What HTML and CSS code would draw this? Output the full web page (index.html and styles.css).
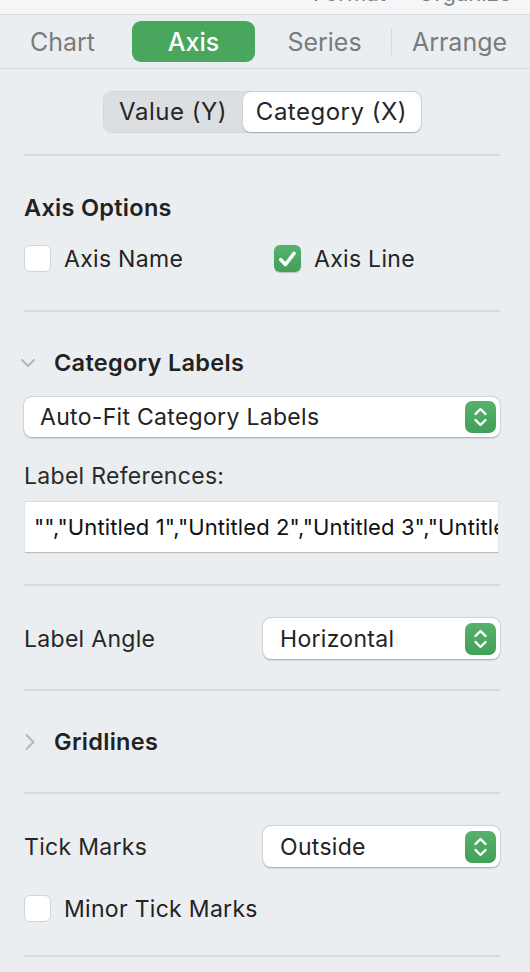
FILE: index.html
```html
<!DOCTYPE html>
<html>
<head>
<meta charset="utf-8">
<link rel="stylesheet" href="styles.css">
</head>
<body>
<div class="topstrip">
  <div class="toptext"><span class="t-format">Format</span><span class="t-organize">Organize</span></div>
</div>
<div class="tabs">
  <div class="tab">Chart</div>
  <div class="tab active">Axis</div>
  <div class="tab">Series</div>
  <div class="tabdiv"></div>
  <div class="tab">Arrange</div>
</div>
<div class="content">
  <div class="segwrap">
    <div class="seg">
      <div class="segitem">Value (Y)</div>
      <div class="segitem on">Category (X)</div>
    </div>
  </div>
  <div class="sep s1"></div>

  <div class="heading h-axis">Axis Options</div>
  <div class="checkrow r-axis">
    <div class="checkitem first"><span class="cb"></span><span>Axis Name</span></div>
    <div class="checkitem"><span class="cb checked"><svg viewBox="0 0 28 28" width="28" height="28"><path d="M7 14.5 L11.8 19.8 L20.8 8.2" fill="none" stroke="#fff" stroke-width="3.6" stroke-linecap="round" stroke-linejoin="round"/></svg></span><span>Axis Line</span></div>
  </div>
  <div class="sep s2"></div>

  <div class="heading disc h-cat"><svg class="chev" viewBox="0 0 16 10" width="16" height="10"><path d="M2 2 L8 8 L14 2" fill="none" stroke="#b4b6b8" stroke-width="2" stroke-linecap="round" stroke-linejoin="round"/></svg><span>Category Labels</span></div>
  <div class="popup full p-auto"><span class="ptext">Auto-Fit Category Labels</span><span class="stepper"><svg viewBox="0 0 31 32" width="31" height="32"><path d="M10.5 13 L15.5 8 L20.5 13" fill="none" stroke="#fff" stroke-width="2.4" stroke-linecap="round" stroke-linejoin="round"/><path d="M10.5 19 L15.5 24 L20.5 19" fill="none" stroke="#fff" stroke-width="2.4" stroke-linecap="round" stroke-linejoin="round"/></svg></span></div>
  <div class="label l-ref">Label References:</div>
  <div class="field">"","Untitled 1","Untitled 2","Untitled 3","Untitled 4","Untitled 5"</div>
  <div class="sep s3"></div>

  <div class="formrow r-angle">
    <div class="rowlabel">Label Angle</div>
    <div class="popup half"><span class="ptext">Horizontal</span><span class="stepper"><svg viewBox="0 0 31 32" width="31" height="32"><path d="M10.5 13 L15.5 8 L20.5 13" fill="none" stroke="#fff" stroke-width="2.4" stroke-linecap="round" stroke-linejoin="round"/><path d="M10.5 19 L15.5 24 L20.5 19" fill="none" stroke="#fff" stroke-width="2.4" stroke-linecap="round" stroke-linejoin="round"/></svg></span></div>
  </div>
  <div class="sep s4"></div>

  <div class="heading disc h-grid"><svg class="chev right" viewBox="0 0 12 18" width="12" height="18"><path d="M2.5 2 L9.5 9 L2.5 16" fill="none" stroke="#b4b6b8" stroke-width="2" stroke-linecap="round" stroke-linejoin="round"/></svg><span>Gridlines</span></div>
  <div class="sep s5"></div>

  <div class="formrow r-tick">
    <div class="rowlabel">Tick Marks</div>
    <div class="popup half"><span class="ptext">Outside</span><span class="stepper"><svg viewBox="0 0 31 32" width="31" height="32"><path d="M10.5 13 L15.5 8 L20.5 13" fill="none" stroke="#fff" stroke-width="2.4" stroke-linecap="round" stroke-linejoin="round"/><path d="M10.5 19 L15.5 24 L20.5 19" fill="none" stroke="#fff" stroke-width="2.4" stroke-linecap="round" stroke-linejoin="round"/></svg></span></div>
  </div>
  <div class="checkrow r-minor">
    <div class="checkitem"><span class="cb"></span><span>Minor Tick Marks</span></div>
  </div>
  <div class="sep s6"></div>
</div>
</body>
</html>
```
FILE: styles.css
```css
html, body {
  margin: 0;
  padding: 0;
}
body {
  width: 530px;
  height: 972px;
  overflow: hidden;
  background: #ebeef1;
  font-family: Inter, "Liberation Sans", sans-serif;
  color: #232323;
  letter-spacing: 0.3px;
  -webkit-font-smoothing: antialiased;
}
.topstrip {
  height: 14px;
  background: #f5f6f7;
  border-bottom: 1px solid #d8dadc;
  overflow: hidden;
}
.toptext {
  display: flex;
  margin-top: -17px;
  line-height: 20px;
  font-size: 22px;
  letter-spacing: 0;
  color: #7c7c7c;
}
.t-format { margin-left: 313px; }
.t-organize { margin-left: 32px; }

.tabs {
  height: 53px;
  border-bottom: 1px solid #d8dadc;
  display: flex;
  align-items: center;
  padding-left: 1px;
}
.tab {
  width: 123px;
  height: 41px;
  line-height: 42px;
  text-align: center;
  font-size: 25px;
  letter-spacing: 0;
  color: #7a7b7c;
  margin-right: 8px;
  border-radius: 9px;
}
.tab.active {
  background: #48a65d;
  color: #fff;
  font-weight: 500;
}
.tabdiv {
  width: 1px;
  height: 27px;
  background: #d6d8da;
  margin-left: -3px;
  margin-right: 6px;
}

.content {
  padding: 0 30px 0 24px;
}
.segwrap {
  display: flex;
  justify-content: center;
  margin-top: 22px;
}
.seg {
  display: flex;
  height: 42px;
  background: #dcdfe2;
  border-radius: 9px;
  padding: 1px;
  box-sizing: border-box;
  box-shadow: inset 0 0 0 0.5px rgba(0,0,0,0.06);
}
.segitem {
  font-size: 24px;
  letter-spacing: 0.5px;
  line-height: 40px;
  color: #262626;
  width: 139px;
  box-sizing: border-box;
  text-align: center;
  white-space: nowrap;
}
.segitem.on {
  width: 178px;
  background: #fff;
  border-radius: 8px;
  box-shadow: 0 0.5px 1.5px rgba(0,0,0,0.25);
}

.sep {
  height: 2px;
  background: #d7d9dc;
}
.s1 { margin-top: 21px; }
.s2 { margin-top: 38px; }
.s3 { margin-top: 32px; }
.s4 { margin-top: 30px; }
.s5 { margin-top: 36px; }
.s6 { margin-top: 33px; }

.heading {
  font-size: 23.5px;
  font-weight: 600;
  line-height: 28px;
  color: #222;
}
.h-axis { margin-top: 38px; }
.h-cat { margin-top: 37px; }
.h-grid { margin-top: 37px; }
.heading.disc {
  display: flex;
  align-items: center;
}
.heading.disc span {
  margin-left: 18px;
}
.chev {
  display: block;
  margin-left: -4px;
  width: 16px;
}
.chev.right {
  margin-left: 0;
  width: 12px;
}
.heading.disc .chev.right + span {
  margin-left: 18px;
}

.checkrow {
  display: flex;
  height: 27px;
  align-items: center;
  font-size: 23px;
}
.r-axis { margin-top: 23px; }
.r-minor { margin-top: 28px; }
.checkitem {
  display: flex;
  align-items: center;
}
.checkitem.first {
  width: 250px;
}
.cb {
  width: 27px;
  height: 27px;
  box-sizing: border-box;
  border-radius: 6px;
  background: #fff;
  border: 1px solid #d2d3d5;
  margin-right: 13px;
  display: flex;
  align-items: center;
  justify-content: center;
}
.cb.checked {
  border: none;
  background: linear-gradient(#56b26d, #43a058);
  box-shadow: 0 0.5px 1px rgba(0,0,0,0.2);
}
.cb svg { display: block; }

.popup {
  height: 40px;
  background: #fff;
  border-radius: 8px;
  box-shadow: 0 0.5px 2px rgba(0,0,0,0.3), 0 0 0 0.5px rgba(0,0,0,0.06);
  display: flex;
  align-items: center;
  justify-content: space-between;
  box-sizing: border-box;
  padding: 0 4px 0 16px;
  font-size: 23px;
}
.p-auto { margin-top: 20px; }
.popup.half {
  width: 237px;
  height: 41px;
  padding-left: 17px;
}
.stepper {
  width: 31px;
  height: 32px;
  border-radius: 7px;
  background: linear-gradient(#55b16c, #43a058);
  display: block;
}
.stepper svg { display: block; }

.label {
  font-size: 23px;
  line-height: 28px;
  color: #2a2a2a;
}
.l-ref { margin-top: 25px; }
.field {
  margin-top: 11px;
  margin-left: 1px;
  margin-right: 2px;
  height: 51px;
  line-height: 50px;
  background: #fff;
  box-sizing: border-box;
  border-top: 1px solid #dcdcdc;
  box-shadow: 0 1px 1px rgba(0,0,0,0.2);
  padding: 0 0 0 9px;
  font-size: 22px;
  letter-spacing: 0.1px;
  white-space: nowrap;
  overflow: hidden;
  color: #111;
}

.formrow {
  display: flex;
  align-items: center;
  justify-content: space-between;
  font-size: 23px;
}
.r-angle { margin-top: 32px; }
.r-tick { margin-top: 32px; }
.rowlabel { color: #262626; }
```
